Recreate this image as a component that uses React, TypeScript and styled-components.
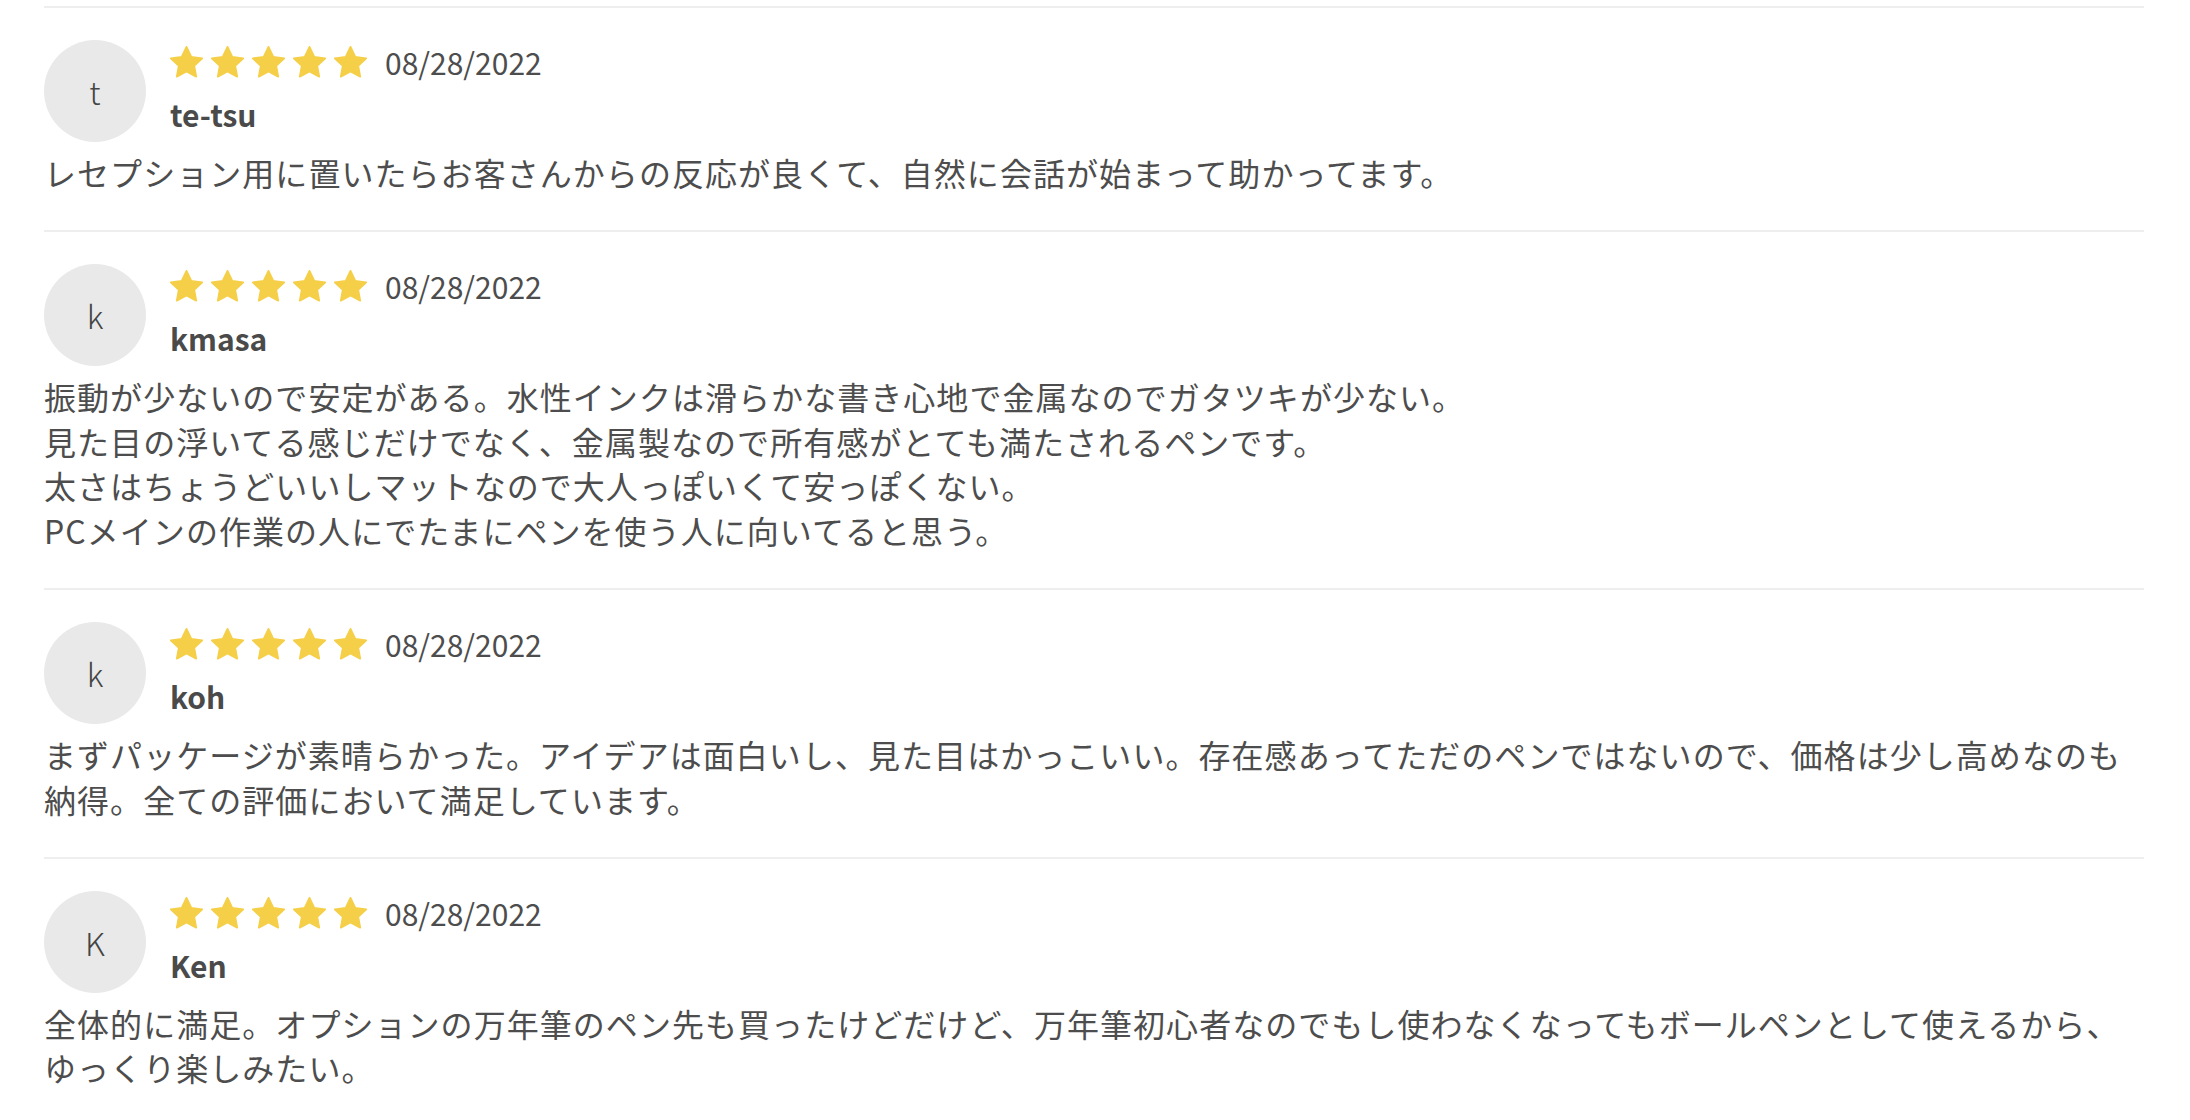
import styled, { createGlobalStyle } from 'styled-components';

const GlobalStyle = createGlobalStyle`
  body {
    margin: 0;
    background: #ffffff;
    font-family: "Noto Sans CJK JP", "Noto Sans", sans-serif;
    color: #4d4d4d;
  }
`;

const ReviewList = styled.section`
  padding: 6px 46px 0 44px;
`;

const ReviewItem = styled.article`
  border-top: 2px solid #eeeeee;
  padding: 32px 0 35px;
`;

const ReviewHeader = styled.div`
  display: flex;
  align-items: flex-start;
  gap: 24px;
`;

const Avatar = styled.div`
  width: 102px;
  height: 102px;
  border-radius: 50%;
  background-color: #e9e9e9;
  display: flex;
  align-items: center;
  justify-content: center;
  font-size: 32px;
  font-weight: 300;
  color: #444444;
  flex-shrink: 0;
`;

const Meta = styled.div`
  display: flex;
  flex-direction: column;
`;

const RatingRow = styled.div`
  display: flex;
  align-items: center;
  height: 44px;
  gap: 18px;
`;

const Stars = styled.div`
  display: flex;
  gap: 8px;
`;

const DateText = styled.span`
  font-size: 30px;
  color: #4d4d4d;
`;

const UserName = styled.div`
  margin-top: 8px;
  font-size: 30px;
  line-height: 44px;
  font-weight: 700;
  color: #4a4a4a;
`;

const Body = styled.p`
  margin: 8px 0 0;
  font-size: 32px;
  line-height: 1.4;
  letter-spacing: 1.05px;
  white-space: pre-line;
  color: #4d4d4d;
`;

const Star = () => (
  <svg width="33" height="32" viewBox="1.3 1 21.4 20.8" aria-hidden="true">
    <path
      d="M12 1.6l3.1 6.5 7.1.9-5.2 4.9 1.3 7-6.3-3.4-6.3 3.4 1.3-7-5.2-4.9 7.1-.9z"
      fill="#f5cf48"
      stroke="#f5cf48"
      strokeWidth="1.2"
      strokeLinejoin="round"
    />
  </svg>
);

type Review = {
  name: string;
  date: string;
  rating: number;
  text: string;
};

const reviews: Review[] = [
  {
    name: 'te-tsu',
    date: '08/28/2022',
    rating: 5,
    text: 'レセプション用に置いたらお客さんからの反応が良くて、自然に会話が始まって助かってます。',
  },
  {
    name: 'kmasa',
    date: '08/28/2022',
    rating: 5,
    text:
      '振動が少ないので安定がある。水性インクは滑らかな書き心地で金属なのでガタツキが少ない。\n見た目の浮いてる感じだけでなく、金属製なので所有感がとても満たされるペンです。\n太さはちょうどいいしマットなので大人っぽいくて安っぽくない。\nPCメインの作業の人にでたまにペンを使う人に向いてると思う。',
  },
  {
    name: 'koh',
    date: '08/28/2022',
    rating: 5,
    text:
      'まずパッケージが素晴らかった。アイデアは面白いし、見た目はかっこいい。存在感あってただのペンではないので、価格は少し高めなのも納得。全ての評価において満足しています。',
  },
  {
    name: 'Ken',
    date: '08/28/2022',
    rating: 5,
    text:
      '全体的に満足。オプションの万年筆のペン先も買ったけどだけど、万年筆初心者なのでもし使わなくなってもボールペンとして使えるから、ゆっくり楽しみたい。',
  },
];

const App = () => {
  return (
    <>
      <GlobalStyle />
      <ReviewList>
        {reviews.map((review) => (
          <ReviewItem key={review.name}>
            <ReviewHeader>
              <Avatar>{review.name.charAt(0)}</Avatar>
              <Meta>
                <RatingRow>
                  <Stars>
                    {Array.from({ length: review.rating }).map((_, i) => (
                      <Star key={i} />
                    ))}
                  </Stars>
                  <DateText>{review.date}</DateText>
                </RatingRow>
                <UserName>{review.name}</UserName>
              </Meta>
            </ReviewHeader>
            <Body>{review.text}</Body>
          </ReviewItem>
        ))}
      </ReviewList>
    </>
  );
};

export default App;
